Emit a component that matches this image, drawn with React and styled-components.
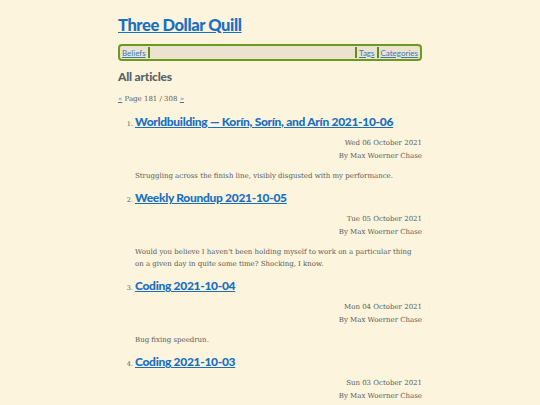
import styled, { createGlobalStyle } from "styled-components";

const GlobalStyle = createGlobalStyle`
  html, body {
    margin: 0;
    padding: 0;
    background: #fcf4dc;
  }
  body {
    font-family: "DejaVu Serif", serif;
    color: #5b5b5b;
  }
`;

const ARTICLES = [
  {
    title: "Worldbuilding — Korín, Sorín, and Arín 2021-10-06",
    date: "Wed 06 October 2021",
    summary:
      "Struggling across the finish line, visibly disgusted with my performance.",
  },
  {
    title: "Weekly Roundup 2021-10-05",
    date: "Tue 05 October 2021",
    summary:
      "Would you believe I haven't been holding myself to work on a particular thing on a given day in quite some time? Shocking, I know.",
  },
  {
    title: "Coding 2021-10-04",
    date: "Mon 04 October 2021",
    summary: "Bug fixing speedrun.",
  },
  {
    title: "Coding 2021-10-03",
    date: "Sun 03 October 2021",
    summary: "More fixes.",
  },
];

const App = () => {
  return (
    <>
      <GlobalStyle />
      <Page>
        <Header>
          <SiteTitle>
            <a href="#">Three Dollar Quill</a>
          </SiteTitle>
          <Nav>
            <NavGroup>
              <NavItem $right>
                <a href="#">Beliefs</a>
              </NavItem>
            </NavGroup>
            <NavGroup>
              <NavItem $left>
                <a href="#">Tags</a>
              </NavItem>
              <NavItem $left>
                <a href="#">Categories</a>
              </NavItem>
            </NavGroup>
          </Nav>
        </Header>

        <Heading>All articles</Heading>
        <Pager>
          <a href="#">«</a> Page 181 / 308 <a href="#">»</a>
        </Pager>

        <List>
          {ARTICLES.map((a) => (
            <Entry key={a.title}>
              <EntryTitle>
                <a href="#">{a.title}</a>
              </EntryTitle>
              <Meta>
                <span>{a.date}</span>
                <span>By Max Woerner Chase</span>
              </Meta>
              <Summary>{a.summary}</Summary>
            </Entry>
          ))}
        </List>
      </Page>
    </>
  );
};

export default App;

const Page = styled.main`
  width: 304px;
  margin: 0 auto;
  padding-top: 15px;
`;

const Header = styled.header`
  display: flex;
  flex-direction: column;
  gap: 9px;
`;

const SiteTitle = styled.h1`
  margin: 0;
  font-family: "Lato", sans-serif;
  font-size: 16.5px;
  font-weight: 900;
  line-height: 20px;
  letter-spacing: -0.4px;

  a {
    color: #1a6fc2;
  }
`;

const Nav = styled.nav`
  display: flex;
  justify-content: space-between;
  align-items: stretch;
  height: 11px;
  padding: 1px 0;
  border: 2px solid #6a9a1f;
  border-radius: 4px;
  background: #ebe3cf;
`;

const NavGroup = styled.ul`
  display: flex;
  margin: 0;
  padding: 0;
  list-style: none;
`;

const NavItem = styled.li`
  display: flex;
  align-items: center;
  padding: 0 2px;
  border-left: ${(p) => (p.$left ? "2px solid #5f8f1a" : "none")};
  border-right: ${(p) => (p.$right ? "2px solid #5f8f1a" : "none")};
  font-family: "Lato", sans-serif;
  font-size: 8px;

  a {
    color: #3b78b5;
  }
`;

const Heading = styled.h2`
  margin: 8px 0 0;
  font-family: "Lato", sans-serif;
  font-size: 12px;
  font-weight: 900;
  line-height: 16px;
  letter-spacing: -0.2px;
  color: #586266;
`;

const Pager = styled.p`
  margin: 9px 0 0;
  font-size: 7px;
  line-height: 10px;
  color: #5b5b5b;

  a {
    color: #3b78b5;
  }
`;

const List = styled.ol`
  margin: 10px 0 0;
  padding-left: 17px;
  font-size: 6.5px;
  color: #5b5b5b;
`;

const Entry = styled.li`
  margin-bottom: 8px;
`;

const EntryTitle = styled.h3`
  margin: 0;
  font-family: "Lato", sans-serif;
  font-size: 12px;
  font-weight: 900;
  line-height: 16px;
  letter-spacing: -0.3px;

  a {
    color: #1a6fc2;
  }
`;

const Meta = styled.div`
  display: flex;
  flex-direction: column;
  align-items: flex-end;
  margin-top: 7px;
  font-size: 7px;
  line-height: 12.5px;
  color: #5b5b5b;
`;

const Summary = styled.p`
  margin: 8px 0 0;
  font-size: 7px;
  line-height: 12px;
  color: #5b5b5b;
`;
